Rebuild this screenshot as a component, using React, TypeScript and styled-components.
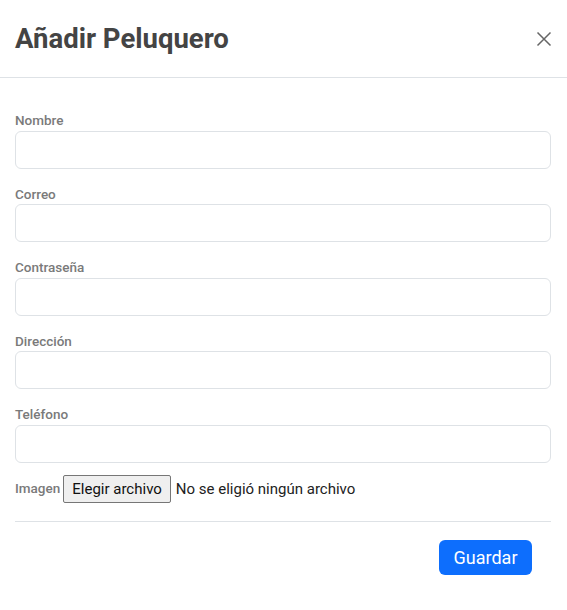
import React from 'react';
import styled, { createGlobalStyle } from 'styled-components';

const GlobalStyle = createGlobalStyle`
  html, body {
    margin: 0;
    padding: 0;
    background: #ffffff;
    font-family: Roboto, "Liberation Sans", sans-serif;
  }
  * {
    box-sizing: border-box;
  }
`;

const fields = ['Nombre', 'Correo', 'Contraseña', 'Dirección', 'Teléfono'];

const App: React.FC = () => {
  return (
    <Modal>
      <GlobalStyle />
      <Header>
        <Title>Añadir Peluquero</Title>
        <CloseButton aria-label="Cerrar">
          <svg width="16" height="16" viewBox="0 0 16 16">
            <path d="M1.5 1.5 L14.5 14.5 M14.5 1.5 L1.5 14.5" stroke="#666" strokeWidth="1.5" fill="none" />
          </svg>
        </CloseButton>
      </Header>
      <Body>
        {fields.map((name) => (
          <Field key={name}>
            <Label>{name}</Label>
            <Input type={name === 'Contraseña' ? 'password' : 'text'} />
          </Field>
        ))}
        <FileRow>
          <Label>Imagen</Label>
          <FileButton type="button">Elegir archivo</FileButton>
          <FileText>No se eligió ningún archivo</FileText>
        </FileRow>
        <Divider />
        <Footer>
          <SaveButton type="button">Guardar</SaveButton>
        </Footer>
      </Body>
    </Modal>
  );
};

const Modal = styled.div`
  width: 567px;
  height: 610px;
  background: #fff;
  display: flex;
  flex-direction: column;
`;

const Header = styled.div`
  display: flex;
  align-items: center;
  justify-content: space-between;
  height: 78px;
  padding: 0 15px;
  border-bottom: 1px solid #dee2e6;
`;

const Title = styled.h1`
  margin: 0;
  font-size: 27.5px;
  font-weight: 700;
  color: #444;
  line-height: 1.2;
`;

const CloseButton = styled.button`
  border: none;
  background: transparent;
  padding: 0;
  display: flex;
  cursor: pointer;
`;

const Body = styled.div`
  padding: 33px 16px 0 15px;
  display: flex;
  flex-direction: column;
`;

const Field = styled.div`
  display: flex;
  flex-direction: column;
  margin-bottom: 16px;
`;

const Label = styled.label`
  font-size: 13.5px;
  font-weight: 500;
  color: #7a7a7a;
  line-height: 19.5px;
`;

const Input = styled.input`
  height: 38px;
  border: 1px solid #dee2e6;
  border-radius: 6px;
  padding: 6px 12px;
  font-size: 16px;
  outline: none;
`;

const FileRow = styled.div`
  display: flex;
  align-items: center;
  margin-top: -4px;
  height: 28px;
`;

const FileButton = styled.button`
  margin-left: 3px;
  height: 28px;
  padding: 0 8px;
  font-family: Roboto, "Liberation Sans", sans-serif;
  font-size: 15px;
  color: #111;
  background: #efefef;
  border: 1px solid #767676;
  border-radius: 2px;
`;

const FileText = styled.span`
  margin-left: 5px;
  font-size: 15px;
  color: #222;
`;

const Divider = styled.hr`
  margin: 18px 0 0;
  border: none;
  border-top: 1px solid #dee2e6;
`;

const Footer = styled.div`
  display: flex;
  justify-content: flex-end;
  padding: 18px 19px 0 0;
`;

const SaveButton = styled.button`
  height: 35px;
  padding: 0 14.5px;
  font-family: Roboto, "Liberation Sans", sans-serif;
  font-size: 18px;
  color: #fff;
  background: #0d6efd;
  border: none;
  border-radius: 6px;
`;

export default App;
